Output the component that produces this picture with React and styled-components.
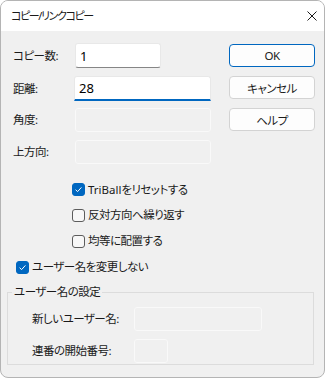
import React from "react";
import styled, { createGlobalStyle } from "styled-components";

const Global = createGlobalStyle`
  html, body { margin: 0; padding: 0; background: #ffffff; }
  body {
    font-family: "Noto Sans", "Noto Sans CJK JP", sans-serif;
    font-size: 11.5px;
    color: #1a1a1a;
  }
  * { box-sizing: border-box; }
`;

const Window = styled.div`
  width: 325px;
  height: 378px;
  border: 1px solid #b4b4b4;
  border-radius: 8px;
  overflow: hidden;
  display: flex;
  flex-direction: column;
  background: #f0f0f0;
  font-feature-settings: "palt";
  letter-spacing: -0.5px;
`;

const TitleBar = styled.div`
  height: 30px;
  flex: none;
  background: #ffffff;
  display: flex;
  align-items: center;
  justify-content: space-between;
  padding: 0 7px 0 10px;
`;

const Title = styled.span`
  font-size: 11px;
  line-height: 16px;
  letter-spacing: -1.4px;
  color: #1a1a1a;
`;

const CloseButton = styled.div`
  width: 10px;
  height: 10px;
  display: flex;
`;

const Body = styled.div`
  flex: 1;
  display: flex;
  flex-direction: column;
  padding-top: 12px;
`;

const TopRow = styled.div`
  display: flex;
  justify-content: space-between;
  padding: 0 9px 0 12px;
`;

const FormColumn = styled.div`
  display: flex;
  flex-direction: column;
`;

const FieldRow = styled.div`
  display: grid;
  grid-template-columns: ${(p) => p.$label}px auto;
  align-items: center;
  height: ${(p) => p.$h}px;
  margin-top: ${(p) => p.$mt || 0}px;
`;

const Label = styled.span`
  font-size: 11.5px;
  line-height: 16px;
  white-space: nowrap;
  color: #1a1a1a;
`;

const TextBox = styled.input`
  width: ${(p) => p.$w}px;
  height: ${(p) => p.$h}px;
  margin: 0;
  padding: 0 4px;
  font-family: "Noto Sans", "Noto Sans CJK JP", sans-serif;
  font-size: 13px;
  letter-spacing: 0;
  color: #000;
  outline: none;
  border-radius: 3px;
  background: ${(p) => (p.disabled ? "#f0f0f0" : "#ffffff")};
  border: 1px solid ${(p) => (p.disabled ? "#f9f9f9" : "#e8e8e8")};
  border-bottom: ${(p) =>
    p.disabled
      ? "1px solid #f9f9f9"
      : p.$focused
      ? "2px solid #0067c0"
      : "1px solid #868686"};
  border-bottom-left-radius: ${(p) => (p.$focused ? 0 : 3)}px;
  border-bottom-right-radius: ${(p) => (p.$focused ? 0 : 3)}px;
`;

const ButtonColumn = styled.div`
  display: flex;
  flex-direction: column;
  gap: 9px;
  margin-top: 1px;
`;

const Button = styled.div`
  width: 86px;
  height: 23px;
  display: flex;
  align-items: center;
  justify-content: center;
  background: #fdfdfd;
  border: 1px solid ${(p) => (p.$default ? "#0067c0" : "#d3d3d3")};
  border-radius: 4px;
  font-size: 11.5px;
  color: #1a1a1a;
`;

const CheckList = styled.div`
  display: flex;
  flex-direction: column;
  margin-top: 13px;
`;

const CheckRow = styled.div`
  display: flex;
  align-items: center;
  gap: 3px;
  height: ${(p) => p.$h}px;
  padding-left: ${(p) => p.$indent}px;
`;

const Box = styled.span`
  width: 13px;
  height: 13px;
  flex: none;
  border-radius: 3px;
  display: flex;
  align-items: center;
  justify-content: center;
  background: ${(p) => (p.$checked ? "#0067c0" : "#f7f7f7")};
  border: 1px solid ${(p) => (p.$checked ? "#0067c0" : "#5c5c5c")};
`;

const CheckText = styled.span`
  font-size: 11.5px;
  line-height: 16px;
  color: #1a1a1a;
`;

const Latin = styled.span`
  letter-spacing: 0;
`;

const Group = styled.fieldset`
  margin: 4px 10px 0 6px;
  padding: 7px 0 1px 0;
  border: 1px solid #dcdcdc;
  min-width: 0;
`;

const Legend = styled.legend`
  margin-left: 4px;
  padding: 0 2px;
  font-size: 11.5px;
  line-height: 16px;
  color: #1a1a1a;
`;

const GroupContent = styled.div`
  display: flex;
  flex-direction: column;
  padding-left: 24px;
`;

const Check = ({ checked }) => (
  <Box $checked={checked}>
    {checked && (
      <svg width="9" height="9" viewBox="0 0 9 9">
        <path d="M1.6 4.7 L3.6 6.6 L7.4 2.4" fill="none" stroke="#fff" strokeWidth="1" />
      </svg>
    )}
  </Box>
);

export default function App() {
  return (
    <>
      <Global />
      <Window>
        <TitleBar>
          <Title>コピー/リンクコピー</Title>
          <CloseButton>
            <svg width="10" height="10" viewBox="0 0 10 10">
              <path d="M0.5 0.5 L9.5 9.5 M9.5 0.5 L0.5 9.5" stroke="#1a1a1a" strokeWidth="1" />
            </svg>
          </CloseButton>
        </TitleBar>
        <Body>
          <TopRow>
            <FormColumn>
              <FieldRow $label={62} $h={25}>
                <Label>コピー数:</Label>
                <TextBox $w={86} $h={25} defaultValue="1" readOnly />
              </FieldRow>
              <FieldRow $label={61} $h={25} $mt={8}>
                <Label>距離:</Label>
                <TextBox $w={137} $h={25} $focused defaultValue="28" readOnly />
              </FieldRow>
              <FieldRow $label={62} $h={24} $mt={7}>
                <Label>角度:</Label>
                <TextBox $w={136} $h={24} disabled />
              </FieldRow>
              <FieldRow $label={62} $h={24} $mt={8}>
                <Label>上方向:</Label>
                <TextBox $w={136} $h={24} disabled />
              </FieldRow>
            </FormColumn>
            <ButtonColumn>
              <Button $default>OK</Button>
              <Button>キャンセル</Button>
              <Button>ヘルプ</Button>
            </ButtonColumn>
          </TopRow>
          <CheckList>
            <CheckRow $h={25} $indent={71}>
              <Check checked />
              <CheckText><Latin>TriBall</Latin>をリセットする</CheckText>
            </CheckRow>
            <CheckRow $h={26} $indent={71}>
              <Check />
              <CheckText>反対方向へ繰り返す</CheckText>
            </CheckRow>
            <CheckRow $h={26} $indent={71}>
              <Check />
              <CheckText>均等に配置する</CheckText>
            </CheckRow>
            <CheckRow $h={26} $indent={15}>
              <Check checked />
              <CheckText>ユーザー名を変更しない</CheckText>
            </CheckRow>
          </CheckList>
          <Group>
            <Legend>ユーザー名の設定</Legend>
            <GroupContent>
              <FieldRow $label={102} $h={24}>
                <Label>新しいユーザー名:</Label>
                <TextBox $w={128} $h={24} disabled />
              </FieldRow>
              <FieldRow $label={102} $h={24} $mt={8}>
                <Label>連番の開始番号:</Label>
                <TextBox $w={34} $h={24} disabled />
              </FieldRow>
            </GroupContent>
          </Group>
        </Body>
      </Window>
    </>
  );
}
